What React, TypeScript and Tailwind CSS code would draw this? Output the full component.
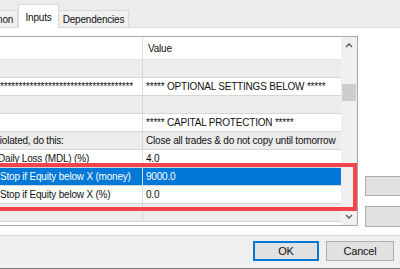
import React from 'react';

interface Row {
    name: string;
    value: string;
    shift?: string;
    gray?: boolean;
    selected?: boolean;
}

const rows: Row[] = [
    { name: '', value: '', gray: true },
    { name: '*'.repeat(36), value: '***** OPTIONAL SETTINGS BELOW *****' },
    { name: '', value: '', gray: true },
    { name: '', value: '***** CAPITAL PROTECTION *****' },
    { name: 'violated, do this:', value: 'Close all trades & do not copy until tomorrow', shift: 'ml-[-5px]', gray: true },
    { name: 'Daily Loss (MDL) (%)', value: '4.0', shift: 'ml-[-2px]' },
    { name: 'Stop if Equity below X (money)', value: '9000.0', selected: true },
    { name: 'Stop if Equity below X (%)', value: '0.0' },
    { name: '', value: '', gray: true },
];

const Chevron = ({ down }: { down?: boolean }) => (
    <svg width="8" height="5" viewBox="0 0 8 5">
        <polyline
            points={down ? '1,1 4,4 7,1' : '1,4 4,1 7,4'}
            fill="none"
            stroke="#606060"
            strokeWidth="1.5"
        />
    </svg>
);

const App: React.FC = () => {
    return (
        <div className="relative w-[400px] h-[269px] overflow-hidden bg-[#f0f0f0] font-['Liberation_Sans',Arial,sans-serif] text-[10px] tracking-[-0.2px] text-[#111]">
            {/* Tabs */}
            <div className="flex items-end h-[28px] border-b border-[#d9d9d9] bg-[#ececec]">
                <div className="ml-[-31px] w-[49px] h-[17px] flex items-center justify-center border border-b-0 border-[#d9d9d9] bg-[#f0f0f0]">
                    Common
                </div>
                <div className="w-[41px] h-[24px] mb-[-1px] flex justify-center pt-[5px] border border-b-0 border-[#d9d9d9] bg-white">
                    Inputs
                </div>
                <div className="w-[70px] h-[17px] flex items-center justify-center border border-l-0 border-b-0 border-[#d9d9d9] bg-[#f0f0f0]">
                    Dependencies
                </div>
            </div>

            {/* Page */}
            <div className="flex h-[208px] bg-white border-b border-[#dadada]">
                <div className="mt-[8px] w-[358px] h-[190px] flex border-t border-b border-r border-[#a9a9a9]">
                    <div className="flex flex-col w-[341px]">
                        <div className="flex h-[23px] border-b border-[#e3e3e3]">
                            <div className="w-[143px] border-r border-[#d9d9d9]" />
                            <div className="flex-1 flex items-center pl-[5px]">Value</div>
                        </div>
                        <div className="flex-1 overflow-hidden">
                            {rows.map((row, i) => (
                                <div
                                    key={i}
                                    className={`flex h-[18px] border-b border-[#d6d6d6] ${
                                        row.selected ? 'bg-[#0078d7] text-white' : row.gray ? 'bg-[#ececec]' : 'bg-white'
                                    }`}
                                >
                                    <div className="w-[143px] flex items-center border-r border-[#d9d9d9] overflow-visible whitespace-nowrap">
                                        <span className={row.shift}>{row.name}</span>
                                    </div>
                                    <div className="flex-1 flex items-center pl-[3px] whitespace-nowrap overflow-hidden">
                                        {row.value}
                                    </div>
                                </div>
                            ))}
                        </div>
                    </div>
                    {/* Scrollbar */}
                    <div className="w-[16px] flex flex-col bg-[#f0f0f0]">
                        <div className="h-[17px] flex items-center justify-center">
                            <Chevron />
                        </div>
                        <div className="h-[30px]" />
                        <div className="mx-[1px] h-[17px] bg-[#cdcdcd]" />
                        <div className="flex-1" />
                        <div className="h-[17px] flex items-center justify-center">
                            <Chevron down />
                        </div>
                    </div>
                </div>
                <div className="flex flex-col pl-[7px] pt-[148px] gap-[10px]">
                    <div className="w-[75px] h-[20px] bg-[#e1e1e1] border border-[#adadad]" />
                    <div className="w-[75px] h-[21px] bg-[#e1e1e1] border border-[#adadad]" />
                </div>
            </div>

            {/* Bottom buttons */}
            <div className="flex justify-end gap-[7px] pr-[6px] pt-[5px] h-[33px] border-b border-[#7a7a7a]">
                <button className="w-[66px] h-[20px] bg-[#e1e1e1] border-2 border-[#0078d7] text-[11px]">
                    OK
                </button>
                <button className="w-[68px] h-[20px] bg-[#e1e1e1] border border-[#adadad] text-[11px]">
                    Cancel
                </button>
            </div>

            {/* Highlight box */}
            <div className="absolute left-[-10px] top-[163px] w-[367px] h-[48px] border-4 border-[#f5434c]" />
        </div>
    );
};

export default App;
